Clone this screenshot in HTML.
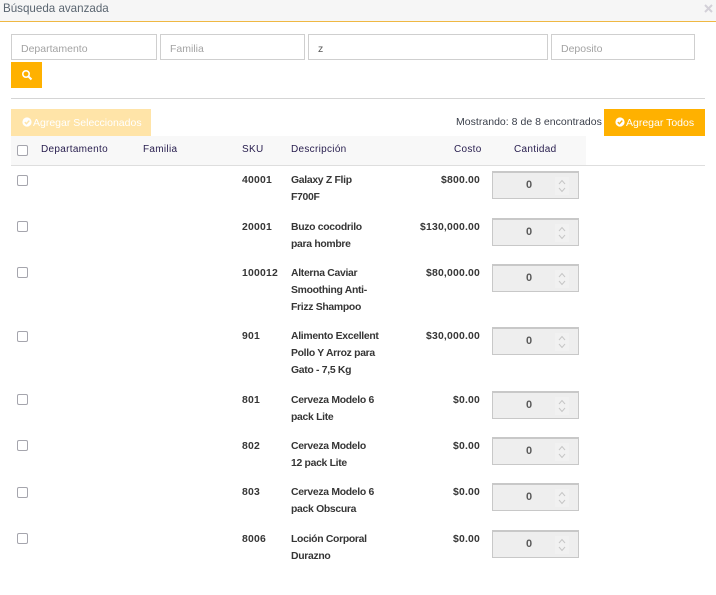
<!DOCTYPE html>
<html><head><meta charset="utf-8">
<style>
html,body{margin:0;padding:0;background:#fff;}
body{width:716px;height:595px;position:relative;overflow:hidden;font-family:"Liberation Sans",sans-serif;font-size:10.5px;color:#3a3a3a;}
.a{position:absolute;white-space:nowrap;}
.inp{position:absolute;top:34px;height:26px;box-sizing:border-box;border:1px solid #cfcfcf;background:#fff;color:#a3a3a3;font-size:10.5px;line-height:26px;padding-left:9px;}
.inp b{font-weight:normal;position:relative;top:1px;}
.th{position:absolute;top:143px;color:#2a2050;font-size:10px;line-height:13px;letter-spacing:.3px;white-space:nowrap;}
.cb{position:absolute;left:17px;width:11px;height:11px;box-sizing:border-box;border:1.5px solid #a5a5ad;border-radius:2px;background:#fff;}
.b{position:absolute;margin-top:1px;font-weight:bold;color:#363636;font-size:10.4px;line-height:17px;white-space:nowrap;}
.r{text-align:right;width:100px;left:380px;letter-spacing:.2px;}
.d{left:291px;letter-spacing:-.3px;}
.s{left:242px;letter-spacing:.22px;}
.q{position:absolute;left:492px;width:87px;height:28px;box-sizing:border-box;border:1px solid #c8c8c8;border-top:2px solid #c8c8c8;background:#eeeeee;}
.q span{position:absolute;left:33px;top:5px;font-weight:bold;font-size:11px;line-height:14px;color:#5a5a5a;}
.q i{position:absolute;left:62px;top:4px;width:14px;height:18px;background:#f1f1f1;}
.q svg{position:absolute;left:64px;top:4px;}
.btn{position:absolute;top:109px;height:27px;line-height:27px;color:#fff;font-size:10.5px;white-space:nowrap;}
.btn svg{position:absolute;top:8px;}
.btn span{position:absolute;left:22px;top:1px;}
</style></head>
<body>
<div class="a" style="left:0;top:0;width:716px;height:21px;background:#f6f6f6;"></div>
<div class="a" style="left:0;top:21px;width:716px;height:1px;background:#efb843;"></div>
<div class="a" style="left:3px;top:2px;font-size:11.6px;line-height:14px;color:#5a6570;">Búsqueda avanzada</div>
<svg class="a" style="left:704px;top:4px" width="9" height="9" viewBox="0 0 9 9"><path d="M1 1L8 8M8 1L1 8" stroke="#d3d0d8" stroke-width="2"/></svg>

<div class="inp" style="left:11px;width:146px;"><b>Departamento</b></div>
<div class="inp" style="left:160px;width:145px;"><b>Familia</b></div>
<div class="inp" style="left:308px;width:240px;color:#555;"><b>z</b></div>
<div class="inp" style="left:551px;width:144px;"><b>Deposito</b></div>
<div class="a" style="left:11px;top:62px;width:31px;height:26px;background:#ffb100;"></div>
<svg class="a" style="left:21px;top:69px" width="12" height="12" viewBox="0 0 12 12"><circle cx="5" cy="5" r="3.2" fill="none" stroke="#fff" stroke-width="1.6"/><path d="M7.5 7.5L10.5 10.5" stroke="#fff" stroke-width="2"/></svg>
<div class="a" style="left:11px;top:98px;width:694px;height:1px;background:#d5d5d5;"></div>

<div class="btn" style="left:11px;width:140px;background:#ffe4a8;">
<svg style="left:11px" width="10" height="10" viewBox="0 0 10 10"><circle cx="5" cy="5" r="4.6" fill="#fff"/><path d="M2.8 5.1L4.4 6.7L7.3 3.6" fill="none" stroke="#ffe4a8" stroke-width="1.4"/></svg>
<span>Agregar Seleccionados</span></div>
<div class="a" style="left:456px;top:115px;font-size:10.5px;line-height:14px;color:#3a3f4a;letter-spacing:.02px;">Mostrando: 8 de 8 encontrados</div>
<div class="btn" style="left:604px;width:101px;background:#ffb100;">
<svg style="left:11px" width="10" height="10" viewBox="0 0 10 10"><circle cx="5" cy="5" r="4.6" fill="#fff"/><path d="M2.8 5.1L4.4 6.7L7.3 3.6" fill="none" stroke="#ffb100" stroke-width="1.4"/></svg>
<span>Agregar Todos</span></div>

<div class="a" style="left:11px;top:136px;width:575px;height:29px;background:#f8f8f8;"></div>
<div class="a" style="left:11px;top:165px;width:694px;height:1px;background:#dedede;"></div>
<div class="cb" style="top:145px;"></div>
<div class="th" style="left:41px;">Departamento</div>
<div class="th" style="left:143px;">Familia</div>
<div class="th" style="left:242px;">SKU</div>
<div class="th" style="left:291px;">Descripción</div>
<div class="th" style="left:454px;">Costo</div>
<div class="th" style="left:514px;">Cantidad</div>

<div class="cb" style="top:175px;"></div>
<div class="b s" style="top:171px;">40001</div>
<div class="b d" style="top:171px;">Galaxy Z Flip<br>F700F</div>
<div class="b r" style="top:171px;">$800.00</div>
<div class="q" style="top:171px;"><span>0</span><i></i><svg width="10" height="18" viewBox="0 0 10 18"><path d="M2 7L5 3.5L8 7M2 11L5 14.5L8 11" fill="none" stroke="#c6c6c6" stroke-width="1"/></svg></div>

<div class="cb" style="top:221px;"></div>
<div class="b s" style="top:218px;">20001</div>
<div class="b d" style="top:218px;">Buzo cocodrilo<br>para hombre</div>
<div class="b r" style="top:218px;">$130,000.00</div>
<div class="q" style="top:218px;"><span>0</span><i></i><svg width="10" height="18" viewBox="0 0 10 18"><path d="M2 7L5 3.5L8 7M2 11L5 14.5L8 11" fill="none" stroke="#c6c6c6" stroke-width="1"/></svg></div>

<div class="cb" style="top:267px;"></div>
<div class="b s" style="top:264px;">100012</div>
<div class="b d" style="top:264px;">Alterna Caviar<br>Smoothing Anti-<br>Frizz Shampoo</div>
<div class="b r" style="top:264px;">$80,000.00</div>
<div class="q" style="top:264px;"><span>0</span><i></i><svg width="10" height="18" viewBox="0 0 10 18"><path d="M2 7L5 3.5L8 7M2 11L5 14.5L8 11" fill="none" stroke="#c6c6c6" stroke-width="1"/></svg></div>

<div class="cb" style="top:331px;"></div>
<div class="b s" style="top:327px;">901</div>
<div class="b d" style="top:327px;">Alimento Excellent<br>Pollo Y Arroz para<br>Gato - 7,5 Kg</div>
<div class="b r" style="top:327px;">$30,000.00</div>
<div class="q" style="top:327px;"><span>0</span><i></i><svg width="10" height="18" viewBox="0 0 10 18"><path d="M2 7L5 3.5L8 7M2 11L5 14.5L8 11" fill="none" stroke="#c6c6c6" stroke-width="1"/></svg></div>

<div class="cb" style="top:394px;"></div>
<div class="b s" style="top:391px;">801</div>
<div class="b d" style="top:391px;">Cerveza Modelo 6<br>pack Lite</div>
<div class="b r" style="top:391px;">$0.00</div>
<div class="q" style="top:391px;"><span>0</span><i></i><svg width="10" height="18" viewBox="0 0 10 18"><path d="M2 7L5 3.5L8 7M2 11L5 14.5L8 11" fill="none" stroke="#c6c6c6" stroke-width="1"/></svg></div>

<div class="cb" style="top:440px;"></div>
<div class="b s" style="top:437px;">802</div>
<div class="b d" style="top:437px;">Cerveza Modelo<br>12 pack Lite</div>
<div class="b r" style="top:437px;">$0.00</div>
<div class="q" style="top:437px;"><span>0</span><i></i><svg width="10" height="18" viewBox="0 0 10 18"><path d="M2 7L5 3.5L8 7M2 11L5 14.5L8 11" fill="none" stroke="#c6c6c6" stroke-width="1"/></svg></div>

<div class="cb" style="top:487px;"></div>
<div class="b s" style="top:483px;">803</div>
<div class="b d" style="top:483px;">Cerveza Modelo 6<br>pack Obscura</div>
<div class="b r" style="top:483px;">$0.00</div>
<div class="q" style="top:483px;"><span>0</span><i></i><svg width="10" height="18" viewBox="0 0 10 18"><path d="M2 7L5 3.5L8 7M2 11L5 14.5L8 11" fill="none" stroke="#c6c6c6" stroke-width="1"/></svg></div>

<div class="cb" style="top:533px;"></div>
<div class="b s" style="top:530px;">8006</div>
<div class="b d" style="top:530px;">Loción Corporal<br>Durazno</div>
<div class="b r" style="top:530px;">$0.00</div>
<div class="q" style="top:530px;"><span>0</span><i></i><svg width="10" height="18" viewBox="0 0 10 18"><path d="M2 7L5 3.5L8 7M2 11L5 14.5L8 11" fill="none" stroke="#c6c6c6" stroke-width="1"/></svg></div>
</body></html>
